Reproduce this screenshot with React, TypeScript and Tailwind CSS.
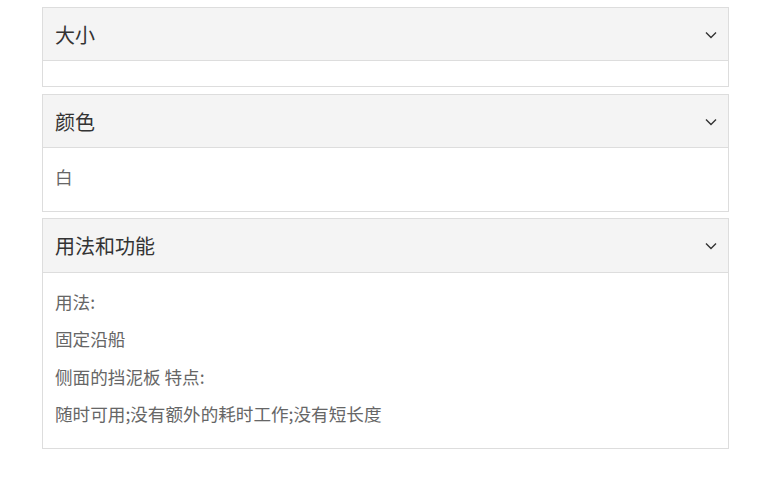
const font = { fontFamily: '"Microsoft YaHei", "Noto Sans CJK SC", "Noto Sans", sans-serif' };

function Chevron() {
  return (
    <svg width="12" height="8" viewBox="0 0 12 8" fill="none" className="shrink-0">
      <polyline points="1,1.5 6,6.5 11,1.5" stroke="#333" strokeWidth="1.4" />
    </svg>
  );
}

function Panel({ title, lines }: { title: string; lines: string[] }) {
  return (
    <section className="border border-[#dddddd] bg-white">
      <div className="flex h-[53.3px] items-center justify-between border-b border-[#dddddd] bg-[#f4f4f4] pl-3 pr-[11px] pt-[2px]">
        <h3 className="text-[20px] leading-none text-[#333333]">{title}</h3>
        <Chevron />
      </div>
      <div className={lines.length ? "px-3 pt-[10px] pb-[15px]" : "px-3 pt-3 pb-[13px]"}>
        {lines.map((line) => (
          <p key={line} className="text-[17.6px] leading-[37.5px] text-[#666666]">
            {line}
          </p>
        ))}
      </div>
    </section>
  );
}

export default function App() {
  return (
    <div className="min-h-[486px] w-[774px] bg-white pt-[7px]" style={font}>
      <div className="ml-[42px] flex w-[687px] flex-col gap-[6.6px]">
        <Panel title="大小" lines={[]} />
        <Panel title="颜色" lines={["白"]} />
        <Panel
          title="用法和功能"
          lines={["用法:", "固定沿船", "侧面的挡泥板 特点:", "随时可用;没有额外的耗时工作;没有短长度"]}
        />
      </div>
    </div>
  );
}
